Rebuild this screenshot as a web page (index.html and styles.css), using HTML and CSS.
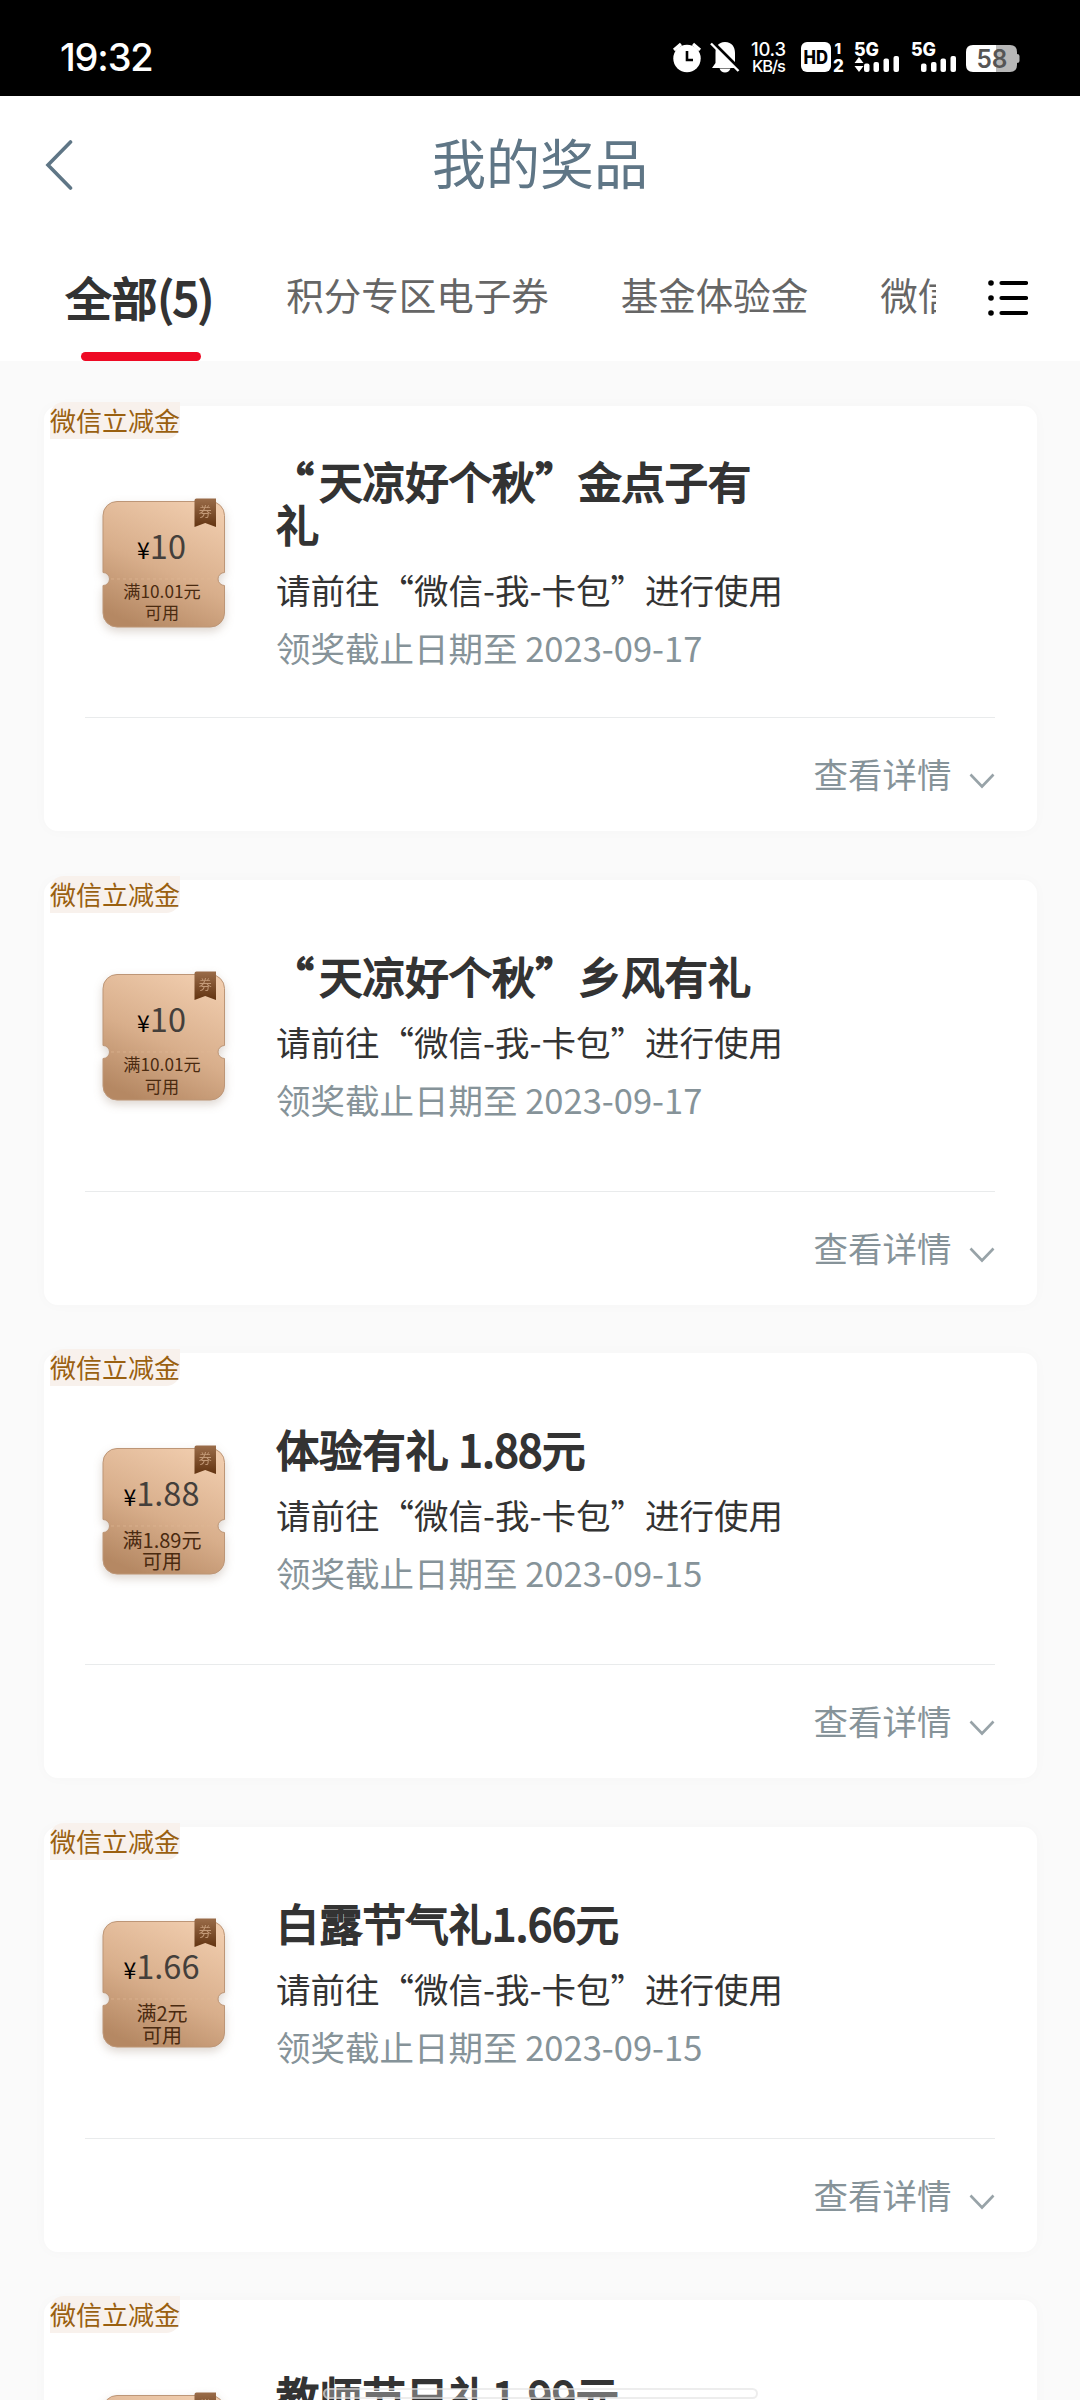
FILE: index.html
```html
<!DOCTYPE html>
<html lang="zh-CN">
<head>
<meta charset="utf-8">
<title>我的奖品</title>
<link rel="stylesheet" href="styles.css">
</head>
<body>
<svg class="defs" width="0" height="0" aria-hidden="true">
  <defs>
    <linearGradient id="gold" x1="0.75" y1="0" x2="0.3" y2="1">
      <stop offset="0" stop-color="#f0ccad"/>
      <stop offset="0.55" stop-color="#d8ae8b"/>
      <stop offset="1" stop-color="#b58863"/>
    </linearGradient>
    <linearGradient id="ribbon" x1="0" y1="0" x2="0" y2="1">
      <stop offset="0" stop-color="#9a6c49"/>
      <stop offset="1" stop-color="#633411"/>
    </linearGradient>
    <symbol id="coupon" viewBox="0 0 124 132">
      <path d="M15 3.500H108.500A14 14 0 0 1 122.500 17.500V74.500A6.500 6.500 0 0 0 122.500 87.500V115A14 14 0 0 1 108.500 129H15A14 14 0 0 1 1 115V87.500A6.500 6.500 0 0 0 1 74.500V17.500A14 14 0 0 1 15 3.500Z" fill="url(#gold)" stroke="#bd9677" stroke-width="1"/>
      <path d="M9 81H115" stroke="#e0b895" stroke-width="1" stroke-dasharray="3 3" opacity=".6"/>
      <path d="M92.500 2.500Q92.500 .5 94.500 .5H114V29L103.200 25L92.500 29Z" fill="url(#ribbon)"/>
      <text x="103.200" y="18" class="ribbon-text">券</text>
    </symbol>
    <symbol id="down" viewBox="0 0 26 16">
      <path d="M1.500 1.500L13 13.500L24.500 1.500" fill="none" stroke="#98a3a8" stroke-width="2.600"/>
    </symbol>
  </defs>
</svg>

<div class="screen">
  <header class="status">
    <span class="clock">19:32</span>
    <svg class="indicators" viewBox="670 41 350 32" width="350" height="32">
      <g fill="#fff">
        <circle cx="687" cy="58.500" r="13.700"/>
        <path d="M674 50L681 44M700 50L693 44" stroke="#fff" stroke-width="3.200"/>
        <path d="M687 51V60H693" fill="none" stroke="#000" stroke-width="2.600"/>
        <path d="M725 42C732 42 735 47 735 53V64L738 68H712L715.500 63V53C715.500 47 718 42 725 42ZM719.500 68.500H730.500Q729 72.500 725 72.500T719.500 68.500Z"/>
        <path d="M712 42L740 70" stroke="#000" stroke-width="4"/>
        <path d="M711 43.500L738.500 71" stroke="#fff" stroke-width="2.400"/>
        <text x="751" y="56" class="net" font-size="18.500" textLength="35">10.3</text>
        <text x="752" y="72" class="net" font-size="16.500" textLength="34">KB/s</text>
        <rect x="801" y="42" width="30" height="30" rx="6"/>
        <text x="803.500" y="64" class="glyph dark" font-size="18.500" textLength="24.500" lengthAdjust="spacingAndGlyphs">HD</text>
        <text x="834.500" y="53.500" class="glyph" font-size="15">1</text>
        <text x="833" y="72" class="glyph" font-size="17">2</text>
        <text x="854" y="56" class="glyph" font-size="18.500" textLength="25" lengthAdjust="spacingAndGlyphs">5G</text>
        <path d="M859 57L863.500 63H854.500ZM859 72L863.500 66H854.500Z"/>
        <rect x="864" y="63.500" width="5.500" height="8.500" rx="2"/>
        <rect x="873.500" y="62" width="5.500" height="10" rx="2"/>
        <rect x="883.500" y="58.500" width="5.500" height="13.500" rx="2"/>
        <rect x="893.500" y="56" width="5.500" height="16" rx="2"/>
        <text x="911" y="56" class="glyph" font-size="18.500" textLength="25" lengthAdjust="spacingAndGlyphs">5G</text>
        <rect x="921" y="63.500" width="5.500" height="8.500" rx="2"/>
        <rect x="931" y="62" width="5.500" height="10" rx="2"/>
        <rect x="940.500" y="58.500" width="5.500" height="13.500" rx="2"/>
        <rect x="950.500" y="56" width="5.500" height="16" rx="2"/>
        <path d="M996 45H1010Q1017 45 1017 52V54Q1019.500 54 1019.500 56V61Q1019.500 63 1017 63V65Q1017 72 1010 72H996Z" fill="#b7b7b7"/>
        <path d="M973 45H996V72H973Q966 72 966 65V52Q966 45 973 45Z"/>
        <text x="976.500" y="68" class="level" font-size="25" textLength="31" lengthAdjust="spacingAndGlyphs">58</text>
      </g>
    </svg>
  </header>

  <nav class="titlebar">
    <svg class="back" viewBox="0 0 28 50" width="28" height="50"><path d="M25.500 2L3 25L25.500 48" fill="none" stroke="#5f7686" stroke-width="3.600" stroke-linecap="round"/></svg>
    <h1>我的奖品</h1>
  </nav>

  <div class="tabs">
    <div class="tablist">
      <span class="tab active">全部(5)</span>
      <span class="tab">积分专区电子券</span>
      <span class="tab">基金体验金</span>
      <span class="tab">微信立减金</span>
    </div>
    <svg class="menu" viewBox="0 0 40 36" width="40" height="36">
      <g fill="#000"><circle cx="3" cy="3" r="2.800"/><circle cx="3" cy="18" r="2.800"/><circle cx="3" cy="33" r="2.800"/></g>
      <path d="M13.500 3H38M13.500 18H38M13.500 33H38" stroke="#000" stroke-width="4.200" stroke-linecap="round"/>
    </svg>
  </div>

  <main class="list">
    <article class="card">
      <span class="tag">微信立减金</span>
      <div class="prize">
        <div class="coupon">
          <svg class="coupon-bg" width="124" height="132"><use href="#coupon"/></svg>
          <div class="price"><small>¥</small>10</div>
          <div class="cond small">满10.01元<br>可用</div>
        </div>
        <div class="info">
          <h2><span class="open">“</span>天凉好个秋”金点子有礼</h2>
          <p class="usage">请前往“微信-我-卡包”进行使用</p>
          <p class="date">领奖截止日期至 2023-09-17</p>
        </div>
      </div>
      <div class="more"><span>查看详情</span><svg width="26" height="16"><use href="#down"/></svg></div>
    </article>

    <article class="card">
      <span class="tag">微信立减金</span>
      <div class="prize">
        <div class="coupon">
          <svg class="coupon-bg" width="124" height="132"><use href="#coupon"/></svg>
          <div class="price"><small>¥</small>10</div>
          <div class="cond small">满10.01元<br>可用</div>
        </div>
        <div class="info">
          <h2><span class="open">“</span>天凉好个秋”乡风有礼</h2>
          <p class="usage">请前往“微信-我-卡包”进行使用</p>
          <p class="date">领奖截止日期至 2023-09-17</p>
        </div>
      </div>
      <div class="more"><span>查看详情</span><svg width="26" height="16"><use href="#down"/></svg></div>
    </article>

    <article class="card">
      <span class="tag">微信立减金</span>
      <div class="prize">
        <div class="coupon">
          <svg class="coupon-bg" width="124" height="132"><use href="#coupon"/></svg>
          <div class="price"><small>¥</small>1.88</div>
          <div class="cond">满1.89元<br>可用</div>
        </div>
        <div class="info">
          <h2>体验有礼 1.88元</h2>
          <p class="usage">请前往“微信-我-卡包”进行使用</p>
          <p class="date">领奖截止日期至 2023-09-15</p>
        </div>
      </div>
      <div class="more"><span>查看详情</span><svg width="26" height="16"><use href="#down"/></svg></div>
    </article>

    <article class="card">
      <span class="tag">微信立减金</span>
      <div class="prize">
        <div class="coupon">
          <svg class="coupon-bg" width="124" height="132"><use href="#coupon"/></svg>
          <div class="price"><small>¥</small>1.66</div>
          <div class="cond">满2元<br>可用</div>
        </div>
        <div class="info">
          <h2>白露节气礼1.66元</h2>
          <p class="usage">请前往“微信-我-卡包”进行使用</p>
          <p class="date">领奖截止日期至 2023-09-15</p>
        </div>
      </div>
      <div class="more"><span>查看详情</span><svg width="26" height="16"><use href="#down"/></svg></div>
    </article>

    <article class="card">
      <span class="tag">微信立减金</span>
      <div class="prize">
        <div class="coupon">
          <svg class="coupon-bg" width="124" height="132"><use href="#coupon"/></svg>
        </div>
        <div class="info">
          <h2>教师节日礼1.99元</h2>
          <p class="usage">&nbsp;</p>
          <p class="date">&nbsp;</p>
        </div>
      </div>
    </article>
  </main>
  <div class="home-bar"></div>
</div>
</body>
</html>
```
FILE: styles.css
```css
* { box-sizing: border-box; }
body, h1, h2, p { margin: 0; }
body {
  font-family: "Noto Sans CJK SC", "Noto Sans", sans-serif;
  text-spacing-trim: space-all;
  background: #fafafa;
}
svg { display: block; flex: none; }
.defs { position: absolute; }

.screen {
  position: relative;
  width: 1080px;
  height: 2400px;
  overflow: hidden;
  background: #fafafa;
}

.status {
  display: flex;
  justify-content: space-between;
  align-items: center;
  height: 96px;
  padding: 18px 60px 0;
  background: #000;
  color: #fff;
}
.clock {
  font: 500 38px/40px Inter, sans-serif;
  letter-spacing: -1.2px;
}
.indicators { overflow: visible; }
.net { font-family: Inter, sans-serif; font-weight: 500; }
.glyph { font-family: Inter, sans-serif; font-weight: 800; }
.dark { fill: #000; }
.level { font-family: Inter, sans-serif; font-weight: 600; fill: #555; }

.titlebar {
  display: grid;
  grid-template-columns: 1fr auto 1fr;
  align-items: center;
  height: 138px;
  padding: 0 45px;
  background: #fff;
}
.titlebar h1 {
  padding-bottom: 6px;
  font-size: 54px;
  font-weight: 400;
  line-height: 80px;
  color: #5f7686;
}

.tabs {
  display: flex;
  align-items: center;
  height: 127px;
  background: #fff;
}
.tablist {
  display: flex;
  align-items: center;
  gap: 72px;
  width: 936px;
  height: 127px;
  padding-left: 65.500px;
  overflow: hidden;
  white-space: nowrap;
}
.tab {
  flex: none;
  height: 127px;
  font-size: 37.5px;
  line-height: 120px;
  color: #666;
}
.tab.active {
  position: relative;
  font-size: 46px;
  line-height: 124px;
  color: #333;
  -webkit-text-stroke: 1.9px #333;
}
.tab.active::after {
  content: "";
  position: absolute;
  left: 15.500px;
  bottom: 0;
  width: 120px;
  height: 9px;
  border-radius: 5px;
  background: #ee0a24;
}
.menu { margin-left: 52px; }

.list {
  display: flex;
  flex-direction: column;
  gap: 48.500px;
  padding: 45px 43.500px 0 44px;
}
.card {
  position: relative;
  height: 425px;
  flex: none;
  padding: 0 42px 0 41px;
  border-radius: 14px;
  background: #fff;
  box-shadow: 0 0 14px rgba(0, 0, 0, .025);
}
.tag {
  position: absolute;
  left: 6px;
  top: -4px;
  height: 37px;
  border-radius: 14px 0 14px 0;
  background: #f8f1ec;
  color: #9a6010;
  font-size: 26px;
  line-height: 35px;
}
.prize {
  display: flex;
  align-items: center;
  gap: 50px;
  height: 312px;
  padding-left: 17px;
  border-bottom: 1px solid #e9ebec;
}
.coupon {
  position: relative;
  width: 124px;
  height: 132px;
  margin-top: 4px;
  text-align: center;
}
.coupon-bg {
  position: absolute;
  inset: 0;
  overflow: visible;
  filter: drop-shadow(0 4px 5px rgba(100, 70, 40, .22));
}
.ribbon-text { font-size: 13px; fill: #c39a78; text-anchor: middle; }
.price {
  position: relative;
  padding: 27px 5px 0 0;
  font-size: 32.500px;
  line-height: 40px;
  color: #443f3b;
}
.price small { font-size: 23px; color: #000; }
.cond {
  position: relative;
  padding: 13px 4px 0 0;
  font-size: 20px;
  line-height: 21.500px;
  color: #4a2a10;
}
.cond.small { padding-top: 11px; font-size: 17.200px; }

.info { width: 512px; margin-top: 12px; }
.info h2 {
  font-size: 43.200px;
  font-weight: 400;
  line-height: 43px;
  color: #333;
  -webkit-text-stroke: 1.9px #333;
}
.open {
  position: relative;
  left: -5px;
}
.usage {
  margin-top: 15px;
  font-size: 34.500px;
  line-height: 58px;
  color: #333;
}
.date {
  font-size: 34.500px;
  line-height: 59px;
  color: #869399;
}

.more {
  display: flex;
  justify-content: flex-end;
  align-items: center;
  gap: 17px;
  height: 113px;
  font-size: 34.500px;
  color: #869399;
}
.more span { padding-bottom: 3px; }
.more svg { margin-top: 13px; }

.home-bar {
  position: absolute;
  left: 323px;
  top: 2388px;
  width: 435px;
  height: 11px;
  border: 2px solid rgba(225, 225, 225, .6);
  border-radius: 6px;
  background: rgba(255, 255, 255, .3);
}
```
